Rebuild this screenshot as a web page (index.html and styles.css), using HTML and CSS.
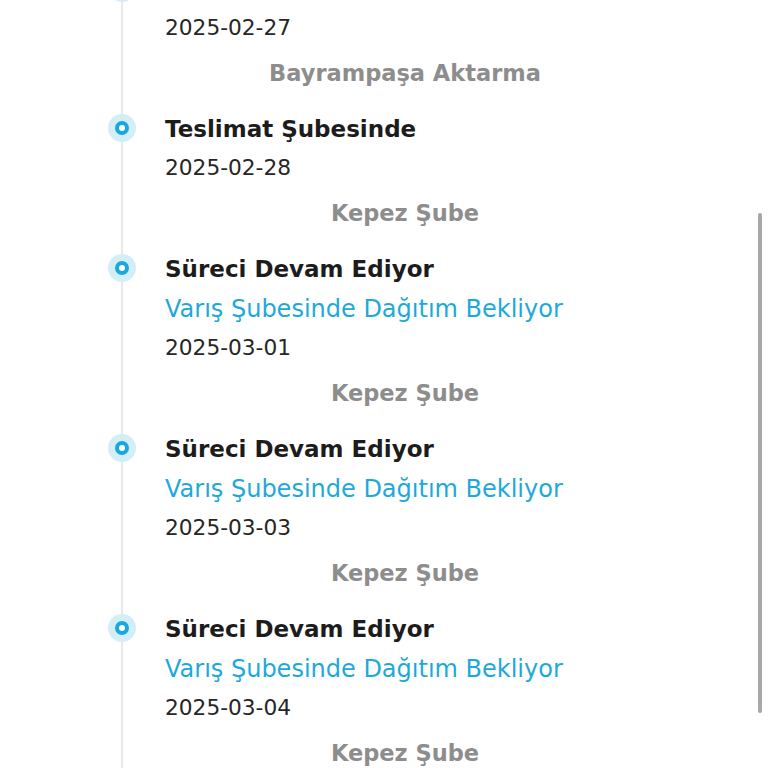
FILE: index.html
```html
<!DOCTYPE html>
<html lang="tr">

<head>
    <meta charset="UTF-8">
    <meta name="viewport" content="width=device-width, initial-scale=1.0">
    <title>Kargo Takip</title>
    <link rel="stylesheet" href="styles.css">
</head>

<body>
    <div class="history">
        <ul class="timeline">
            <li class="event">
                <span class="dot"></span>
                <div class="title"></div>
                <div class="date">2025-02-27</div>
                <div class="branch">Bayrampaşa Aktarma</div>
            </li>
            <li class="event">
                <span class="dot"></span>
                <div class="title">Teslimat Şubesinde</div>
                <div class="date">2025-02-28</div>
                <div class="branch">Kepez Şube</div>
            </li>
            <li class="event">
                <span class="dot"></span>
                <div class="title">Süreci Devam Ediyor</div>
                <div class="status">Varış Şubesinde Dağıtım Bekliyor</div>
                <div class="date">2025-03-01</div>
                <div class="branch">Kepez Şube</div>
            </li>
            <li class="event">
                <span class="dot"></span>
                <div class="title">Süreci Devam Ediyor</div>
                <div class="status">Varış Şubesinde Dağıtım Bekliyor</div>
                <div class="date">2025-03-03</div>
                <div class="branch">Kepez Şube</div>
            </li>
            <li class="event">
                <span class="dot"></span>
                <div class="title">Süreci Devam Ediyor</div>
                <div class="status">Varış Şubesinde Dağıtım Bekliyor</div>
                <div class="date">2025-03-04</div>
                <div class="branch">Kepez Şube</div>
            </li>
        </ul>
        <div class="scroll-thumb"></div>
    </div>
</body>

</html>
```

FILE: styles.css
```css
html,
body {
    margin: 0;
    height: 100%;
    overflow: hidden;
    background: #fff;
}

body {
    font-family: "DejaVu Sans", "Noto Sans", sans-serif;
    color: #222;
}

.history {
    height: 100%;
    overflow: hidden;
}

.timeline {
    list-style: none;
    margin: -31px 0 0 121px;
    padding: 0 123px 0 42px;
    border-left: 2px solid #e9e9e9;
}

.event {
    position: relative;
    padding-bottom: 16px;
}

/* marker sits on the vertical line, level with the title */
.dot {
    position: absolute;
    left: -57px;
    top: 5px;
    width: 28px;
    height: 28px;
    border-radius: 50%;
    background: #d4eef8;
    display: flex;
    align-items: center;
    justify-content: center;
}

.dot::after {
    content: "";
    width: 6px;
    height: 6px;
    border-radius: 50%;
    background: #fff;
    border: 4px solid #1aa8db;
}

.title {
    min-height: 40px;
    font-size: 23px;
    font-weight: 600;
    line-height: 40px;
    color: #1c1c1c;
}

.status {
    font-size: 24px;
    line-height: 40px;
    color: #1ea9da;
}

.date {
    font-size: 21.7px;
    line-height: 38px;
    color: #262626;
}

.branch {
    margin-top: 6px;
    font-size: 22.5px;
    font-weight: 600;
    line-height: 40px;
    color: #8d8d8d;
    text-align: center;
}

.scroll-thumb {
    position: fixed;
    right: 6px;
    top: 213px;
    width: 4px;
    height: 500px;
    border-radius: 2px;
    background: #a8a8a8;
}
```
